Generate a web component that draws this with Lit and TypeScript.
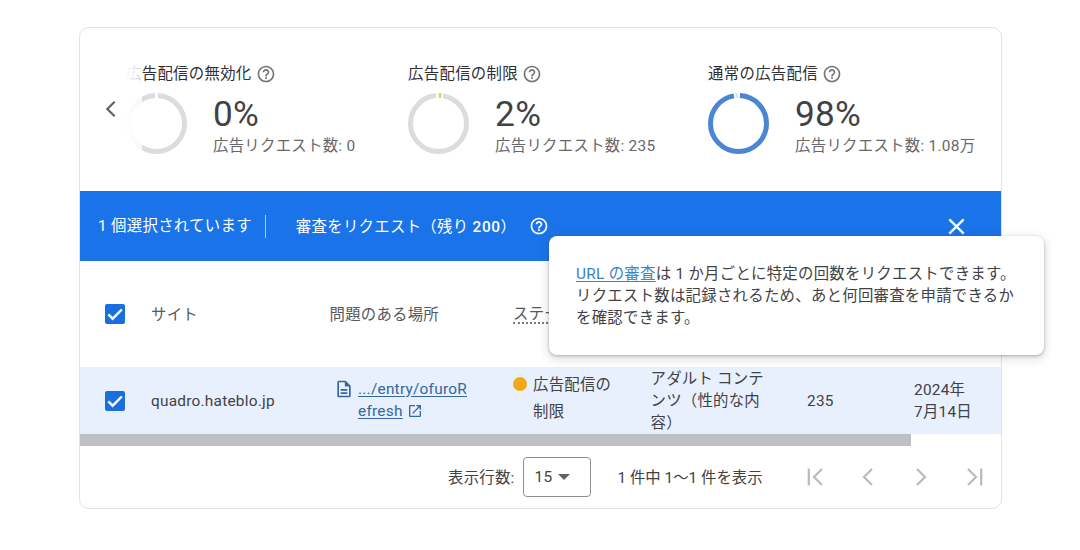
import { LitElement, html, css, svg, nothing } from "lit";
import { customElement, property } from "lit/decorators.js";
import { map } from "lit/directives/map.js";

interface Segment {
  color: string;
  start: number;
  length: number;
}

interface Score {
  title: string;
  percent: string;
  requests: string;
  segments: Segment[];
}

// Segment positions are in percent of the ring, clockwise from the top.
const SCORES: Score[] = [
  {
    title: "広告配信の無効化",
    percent: "0%",
    requests: "0",
    segments: [{ color: "#dcdcdc", start: 0.8, length: 98.4 }],
  },
  {
    title: "広告配信の制限",
    percent: "2%",
    requests: "235",
    segments: [
      { color: "#d2cf50", start: 0.2, length: 1.3 },
      { color: "#dcdcdc", start: 2.6, length: 96 },
    ],
  },
  {
    title: "通常の広告配信",
    percent: "98%",
    requests: "1.08万",
    segments: [
      { color: "#4a86d4", start: 0.8, length: 96.6 },
      { color: "#dde3ea", start: 98.3, length: 1.3 },
    ],
  },
];

const ICONS = {
  help: svg`<path d="M11 18h2v-2h-2v2zm1-16C6.48 2 2 6.48 2 12s4.48 10 10 10 10-4.48 10-10S17.52 2 12 2zm0 18c-4.41 0-8-3.59-8-8s3.59-8 8-8 8 3.59 8 8-3.59 8-8 8zm0-14c-2.21 0-4 1.79-4 4h2c0-1.1.9-2 2-2s2 .9 2 2c0 2-3 1.75-3 5h2c0-2.25 3-2.5 3-5 0-2.21-1.79-4-4-4z"/>`,
  prev: svg`<path d="M16 4l-8 8 8 8" class="line"/>`,
  next: svg`<path d="M8 4l8 8-8 8" class="line"/>`,
  first: svg`<path d="M4.8 3.5v17M18 4l-8 8 8 8" class="line"/>`,
  last: svg`<path d="M19.2 3.5v17M6 4l8 8-8 8" class="line"/>`,
  close: svg`<path d="M4.5 4.5l15 15M19.5 4.5l-15 15" class="line"/>`,
  check: svg`<path d="M4 12.4l5.2 5.2L20.2 6.6" class="line"/>`,
  doc: svg`<path d="M8 16h8v2H8zm0-4h8v2H8zm6-10H6c-1.1 0-2 .9-2 2v16c0 1.1.89 2 1.99 2H18c1.1 0 2-.9 2-2V8l-6-6zm4 18H6V4h7v5h5v11z"/>`,
  open: svg`<path d="M19 19H5V5h7V3H5c-1.11 0-2 .9-2 2v14c0 1.1.89 2 2 2h14c1.1 0 2-.9 2-2v-7h-2v7zM14 3v2h3.59l-9.83 9.83 1.41 1.41L19 6.41V10h2V3h-7z"/>`,
  drop: svg`<path d="M6 9l6 6 6-6z"/>`,
};

/**
 * Inline icon, sized by the font size of its host.
 */
@customElement("ad-icon")
class AdIcon extends LitElement {
  @property() name: keyof typeof ICONS = "help";

  static styles = css`
    :host {
      display: inline-flex;
      flex: none;
    }

    svg {
      width: 1em;
      height: 1em;
      fill: currentColor;
    }

    .line {
      fill: none;
      stroke: currentColor;
      stroke-width: var(--icon-stroke, 2.4);
    }
  `;

  render() {
    return html`<svg viewBox="0 0 24 24">${ICONS[this.name]}</svg>`;
  }
}

/**
 * One figure of the ad serving summary, with its ring.
 */
@customElement("ad-score")
class AdScore extends LitElement {
  @property({ attribute: false }) score?: Score;

  static styles = css`
    :host {
      display: block;
      flex: none;
      white-space: nowrap;
    }

    .title {
      display: flex;
      align-items: center;
      gap: 4px;
      height: 24px;
      font-size: 15.4px;
      letter-spacing: 0.3px;
      color: #2f3033;
    }

    .title ad-icon {
      margin-top: -1px;
      font-size: 20px;
      color: #737679;
    }

    .body {
      display: flex;
      gap: 26px;
      margin-top: 8px;
    }

    .ring {
      width: 61px;
      height: 61px;
      margin-top: -1px;
      transform: rotate(-90deg);
      fill: none;
      stroke-width: 5;
    }

    .percent {
      font-size: 35.2px;
      line-height: 41px;
      color: #414246;
    }

    .requests {
      font-size: 15.4px;
      letter-spacing: 0.28px;
      line-height: 22px;
      color: #66686c;
    }
  `;

  render() {
    if (!this.score) return nothing;
    const { title, percent, requests, segments } = this.score;
    return html`
      <div class="title">${title}<ad-icon name="help"></ad-icon></div>
      <div class="body">
        <svg class="ring" viewBox="0 0 61 61">
          ${map(
            segments,
            (s) => svg`<circle cx="30.5" cy="30.5" r="28" pathLength="100"
              stroke=${s.color}
              stroke-dasharray="${s.length} ${100 - s.length}"
              stroke-dashoffset=${-s.start} />`
          )}
        </svg>
        <div>
          <div class="percent">${percent}</div>
          <div class="requests">広告リクエスト数: ${requests}</div>
        </div>
      </div>
    `;
  }
}

@customElement("app-root")
class AppRoot extends LitElement {
  static styles = css`
    :host {
      display: block;
      box-sizing: border-box;
      height: 550px;
      padding: 27px 0 0 79px;
      overflow: hidden;
      background: #fff;
      font-family: Roboto, "Noto Sans CJK JP", sans-serif;
      font-size: 15.4px;
      letter-spacing: 0.24px;
      line-height: 22px;
      color: #3f4246;
    }

    .card {
      position: relative;
      box-sizing: border-box;
      width: 923px;
      height: 482px;
      border: 1px solid #e2e3e5;
      border-radius: 10px;
    }

    .scores {
      position: relative;
      box-sizing: border-box;
      display: flex;
      gap: 52.7px;
      height: 163px;
      padding: 34px 0 0 20px;
    }

    .scores > .back {
      margin: 36px -48.7px 0 0;
      font-size: 22px;
      color: #5f6368;
    }

    .fade {
      position: absolute;
      left: 44px;
      top: 30px;
      width: 18px;
      height: 110px;
      background: linear-gradient(90deg, #fff, rgba(255, 255, 255, 0.78));
    }

    .selection {
      display: flex;
      align-items: center;
      height: 70px;
      padding: 0 33px 0 18px;
      background: #1a73e8;
      color: #fff;
      letter-spacing: 0.3px;
    }

    .selection .divider {
      width: 1px;
      height: 23px;
      margin: 0 30px 0 13px;
      background: #a9cdfa;
    }

    .selection b {
      font-weight: 500;
      letter-spacing: 0.6px;
    }

    .selection .request {
      padding-top: 1px;
      white-space: pre;
    }

    .selection .help {
      margin-left: 13px;
      font-size: 20px;
    }

    .selection .close {
      margin-left: auto;
      font-size: 23px;
    }

    .row {
      display: grid;
      grid-template-columns: 71px 178.5px 183.5px 137.5px 156.5px 107px 1fr;
      align-items: center;
    }

    .head {
      height: 106px;
      padding-top: 1px;
      box-sizing: border-box;
      color: #55585c;
    }

    .head .status {
      width: max-content;
      line-height: 16px;
      border-bottom: 2px dotted #77797d;
    }

    .entry {
      height: 67px;
      background: #e8f0fd;
      white-space: nowrap;
    }

    .checkbox {
      display: flex;
      align-items: center;
      justify-content: center;
      width: 20px;
      height: 20px;
      margin-left: 25px;
      border-radius: 2px;
      background: #1a6fdf;
      color: #fff;
      font-size: 20px;
      --icon-stroke: 2.9;
    }

    .head .checkbox {
      margin-top: -1px;
    }

    .page {
      display: flex;
      gap: 4px;
      margin-top: -2px;
      padding-left: 4.5px;
      color: #33679f;
    }

    .page > ad-icon {
      margin-top: 1px;
      font-size: 20px;
    }

    a {
      color: #33679f;
      text-decoration: underline;
      text-underline-offset: 2px;
    }

    .page div ad-icon {
      margin-left: 4px;
      font-size: 16px;
      vertical-align: -3px;
    }

    .state {
      display: flex;
      gap: 6px;
      margin-top: -3px;
      line-height: 27px;
    }

    .dot {
      width: 14px;
      height: 14px;
      margin-top: 5px;
      border-radius: 50%;
      background: #f2a918;
    }

    .scrollbar {
      width: 831px;
      height: 12px;
      background: #bdc1c6;
    }

    .footer {
      display: flex;
      align-items: center;
      height: 62px;
      padding-left: 368px;
      white-space: nowrap;
    }

    .size {
      box-sizing: border-box;
      display: flex;
      align-items: center;
      width: 68px;
      height: 40px;
      margin: 0 27px 0 8px;
      padding-left: 11px;
      border: 1px solid #8d9094;
      border-radius: 4px;
    }

    .size ad-icon {
      font-size: 24px;
      color: #5f6368;
    }

    .label,
    .range {
      padding-top: 1px;
    }

    .range {
      letter-spacing: 0;
    }

    .pager {
      display: flex;
      gap: 28.7px;
      margin-left: 41px;
      font-size: 24px;
      color: #b9babc;
      --icon-stroke: 2.2;
    }

    .tooltip {
      position: absolute;
      left: 469px;
      top: 208px;
      box-sizing: border-box;
      width: 495px;
      height: 119px;
      padding: 27px;
      border-radius: 8px;
      background: #fff;
      box-shadow: 0 1px 3px rgba(60, 64, 67, 0.35),
        0 3px 8px 2px rgba(60, 64, 67, 0.14);
      letter-spacing: 0.27px;
      white-space: nowrap;
    }

    .tooltip a {
      color: #3b84c4;
    }
  `;

  render() {
    return html`
      <div class="card">
        <div class="scores">
          <ad-icon class="back" name="prev"></ad-icon>
          ${map(SCORES, (score) => html`<ad-score .score=${score}></ad-score>`)}
          <div class="fade"></div>
        </div>

        <div class="selection">
          <span class="count">1 個選択されています</span>
          <span class="divider"></span>
          <span class="request">審査をリクエスト（残り <b>200</b>）</span>
          <ad-icon class="help" name="help"></ad-icon>
          <ad-icon class="close" name="close"></ad-icon>
        </div>

        <div class="row head">
          ${this._renderCheckbox()}
          <span>サイト</span>
          <span>問題のある場所</span>
          <span class="status">ステー</span>
        </div>

        <div class="row entry">
          ${this._renderCheckbox()}
          <span class="site">quadro.hateblo.jp</span>
          <div class="page">
            <ad-icon name="doc"></ad-icon>
            <div>
              <a>.../entry/ofuroR<br />efresh</a
              ><ad-icon name="open"></ad-icon>
            </div>
          </div>
          <div class="state">
            <span class="dot"></span>
            <span>広告配信の<br />制限</span>
          </div>
          <span>アダルト コンテ<br />ンツ（性的な内<br />容）</span>
          <span>235</span>
          <span>2024年<br />7月14日</span>
        </div>

        <div class="scrollbar"></div>

        <div class="footer">
          <span class="label">表示行数:</span>
          <span class="size">15<ad-icon name="drop"></ad-icon></span>
          <span class="range">1 件中 1～1 件を表示</span>
          <span class="pager">
            ${map(
              ["first", "prev", "next", "last"],
              (name) => html`<ad-icon name=${name}></ad-icon>`
            )}
          </span>
        </div>

        <div class="tooltip">
          <a>URL の審査</a>は 1 か月ごとに特定の回数をリクエストできます。<br />
          リクエスト数は記録されるため、あと何回審査を申請できるか<br />
          を確認できます。
        </div>
      </div>
    `;
  }

  _renderCheckbox() {
    return html`<span class="checkbox"><ad-icon name="check"></ad-icon></span>`;
  }
}

export { AdIcon, AdScore, AppRoot };
